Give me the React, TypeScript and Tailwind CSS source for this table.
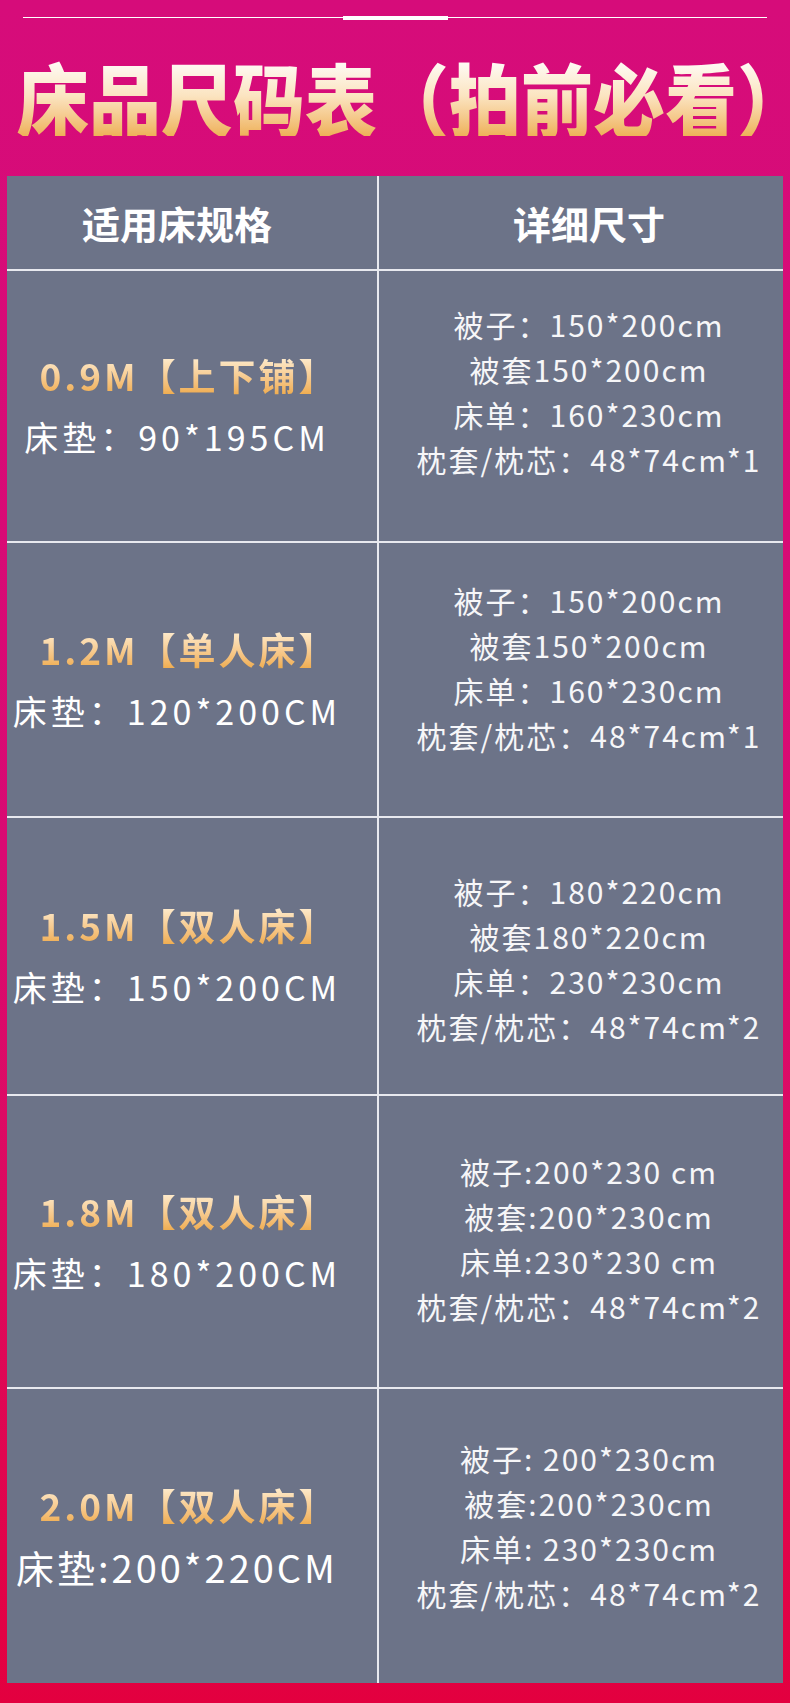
const rows = [
  {
    size: "0.9M",
    label: "【上下铺】",
    mattress: "床垫：90*195CM",
    mattressSize: "text-[34px] tracking-[4px]",
    height: "h-[272px]",
    shift: "pb-[28px]",
    details: ["被子：150*200cm", "被套150*200cm", "床单：160*230cm", "枕套/枕芯：48*74cm*1"],
  },
  {
    size: "1.2M",
    label: "【单人床】",
    mattress: "床垫：120*200CM",
    mattressSize: "text-[34px] tracking-[4px]",
    height: "h-[275px]",
    shift: "pb-[24px]",
    details: ["被子：150*200cm", "被套150*200cm", "床单：160*230cm", "枕套/枕芯：48*74cm*1"],
  },
  {
    size: "1.5M",
    label: "【双人床】",
    mattress: "床垫：150*200CM",
    mattressSize: "text-[34px] tracking-[4px]",
    height: "h-[278px]",
    shift: "pt-[6px]",
    details: ["被子：180*220cm", "被套180*220cm", "床单：230*230cm", "枕套/枕芯：48*74cm*2"],
  },
  {
    size: "1.8M",
    label: "【双人床】",
    mattress: "床垫：180*200CM",
    mattressSize: "text-[34px] tracking-[4px]",
    height: "h-[293px]",
    shift: "pb-[6px]",
    details: ["被子:200*230 cm", "被套:200*230cm", "床单:230*230 cm", "枕套/枕芯：48*74cm*2"],
  },
  {
    size: "2.0M",
    label: "【双人床】",
    mattress: "床垫:200*220CM",
    mattressSize: "text-[38px] tracking-[3px]",
    height: "h-[296px]",
    shift: "pb-[20px]",
    details: ["被子: 200*230cm", "被套:200*230cm", "床单: 230*230cm", "枕套/枕芯：48*74cm*2"],
  },
];

export default function App() {
  return (
    <div className="w-[790px] h-[1703px] bg-gradient-to-b from-[#d60c7a] via-[#d90a72] to-[#e3003f] font-['Noto_Sans_CJK_SC',sans-serif] flex flex-col">
      {/* 顶部装饰线 */}
      <div className="mt-[17px] mx-[23px] h-px bg-white flex justify-center items-center">
        <div className="h-[4px] w-[105px] bg-white" />
      </div>

      {/* 标题 */}
      <div className="mt-[38px] h-[80px] flex justify-center">
        <h1 className="inline-block scale-x-[0.9] text-[80px] leading-none font-black whitespace-nowrap bg-gradient-to-b from-white via-[#fbe4c0] to-[#eeb158] bg-clip-text text-transparent">
          床品尺码表（拍前必看<span className="[font-feature-settings:'halt']">）</span>
        </h1>
      </div>

      {/* 尺码表 */}
      <div className="mt-[40px] mx-[7px] w-[776px] bg-[#6c7388] flex flex-col">
        <div className="flex h-[93px] text-white text-[38px] font-bold">
          <div className="w-[372px] border-r-2 border-[#e8e9ef] flex items-center justify-center pr-[30px]">
            适用床规格
          </div>
          <div className="flex-1 flex items-center justify-center pl-[16px]">详细尺寸</div>
        </div>

        {rows.map((row) => (
          <div key={row.size} className={`flex border-t-2 border-[#e8e9ef] ${row.height}`}>
            <div className="w-[372px] border-r-2 border-[#e8e9ef] flex flex-col items-center justify-center gap-[18px] pr-[30px]">
              <div className="ml-[24px] text-[37px] leading-[44px] font-bold tracking-[3px] whitespace-nowrap bg-gradient-to-b from-[#fff3dc] to-[#eea843] bg-clip-text text-transparent">
                {row.size}
                {row.label}
              </div>
              <div className={`leading-[44px] text-white whitespace-nowrap ${row.mattressSize}`}>
                {row.mattress}
              </div>
            </div>
            <div
              className={`flex-1 flex flex-col items-center justify-center pl-[16px] text-[30px] leading-[45px] tracking-[2px] text-[#f6f6f8] whitespace-nowrap ${row.shift}`}
            >
              {row.details.map((d) => (
                <div key={d}>{d}</div>
              ))}
            </div>
          </div>
        ))}
      </div>
    </div>
  );
}
